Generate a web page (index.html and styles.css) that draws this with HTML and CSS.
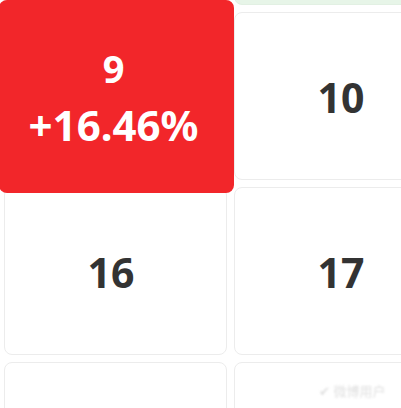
FILE: index.html
```html
<!DOCTYPE html>
<html lang="zh">
<head>
<meta charset="utf-8">
<link rel="stylesheet" href="styles.css">
</head>
<body>
<div class="calendar">
  <div class="cell cell-up"></div>
  <div class="cell cell-up"></div>

  <div class="cell cell-active">
    <div class="pop">
      <span class="pop-day">9</span>
      <span class="pop-rate">+16.46%</span>
    </div>
  </div>
  <div class="cell"><span class="day">10</span></div>

  <div class="cell"><span class="day">16</span></div>
  <div class="cell"><span class="day">17</span></div>

  <div class="cell"></div>
  <div class="cell"><span class="mark">✔ 微博用户</span></div>
</div>
</body>
</html>
```

FILE: styles.css
```css
html, body {
  margin: 0;
  padding: 0;
  background: #ffffff;
  overflow: hidden;
}

body {
  width: 401px;
  height: 408px;
  font-family: "Noto Sans", "Open Sans", "Noto Sans CJK SC", sans-serif;
}

.calendar {
  display: grid;
  grid-template-columns: 223px 223px;
  grid-auto-rows: 168px;
  column-gap: 7px;
  row-gap: 7px;
  padding-left: 4px;
  margin-top: -163px;
}

.cell {
  position: relative;
  box-sizing: border-box;
  border: 1px solid #ececec;
  border-radius: 8px;
  background: #ffffff;
  display: flex;
  align-items: center;
  justify-content: center;
}

.cell-up {
  background: #e7f5e8;
  border-color: #e2f0e3;
}

.day {
  font-size: 41px;
  font-weight: 700;
  color: #333333;
  padding-right: 9px;
  margin-top: 2px;
}

.cell-active {
  z-index: 2;
}

.pop {
  position: absolute;
  left: -6px;
  top: -13px;
  width: 235px;
  height: 193px;
  border-radius: 8px;
  background: #f2262a;
  color: #ffffff;
  display: flex;
  flex-direction: column;
  align-items: center;
  justify-content: center;
  font-weight: 700;
  padding: 6px 6px 0 0;
  box-sizing: border-box;
}

.pop-day {
  font-size: 38px;
  line-height: 52px;
  margin-top: -2px;
}

.pop-rate {
  font-size: 42px;
  line-height: 62px;
}

.mark {
  position: absolute;
  left: 84px;
  top: 18px;
  font-size: 13px;
  color: #e0e0e0;
  filter: blur(0.8px);
  white-space: nowrap;
}
```
